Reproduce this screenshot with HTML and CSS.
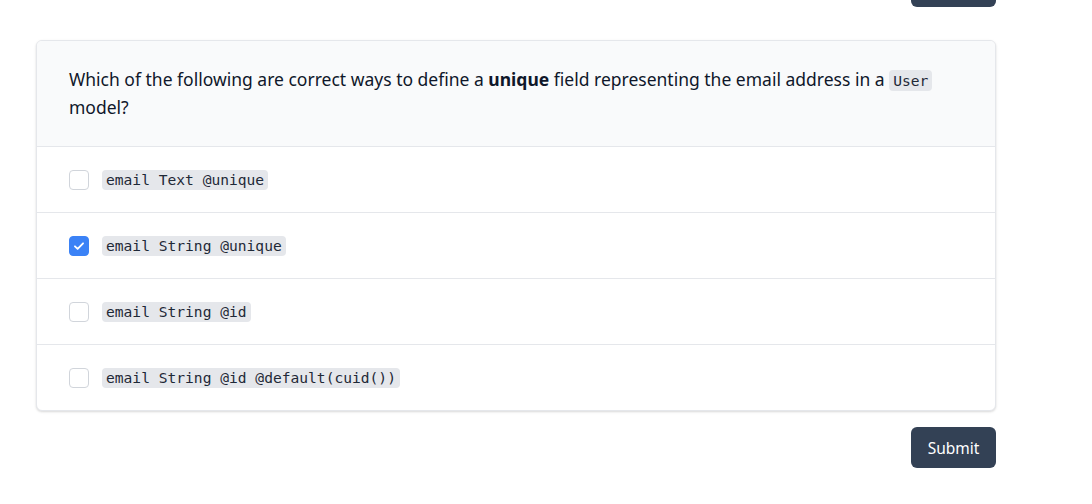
FILE: index.html
```html
<!DOCTYPE html>
<html>
<head>
<meta charset="utf-8">
<link rel="stylesheet" href="styles.css">
</head>
<body>
<div class="page">
  <div class="actions top"><button class="btn">Submit</button></div>
  <div class="card">
    <div class="question">Which of the following are correct ways to define a <strong>unique</strong> field representing the email address in a <code>User</code> model?</div>
    <label class="option"><span class="box"></span><code>email Text @unique</code></label>
    <label class="option"><span class="box checked"><svg viewBox="0 0 20 20" width="20" height="20"><path d="M5.5 10.3l3 3 6-6.3" fill="none" stroke="#fff" stroke-width="2" stroke-linecap="round" stroke-linejoin="round"/></svg></span><code>email String @unique</code></label>
    <label class="option"><span class="box"></span><code>email String @id</code></label>
    <label class="option"><span class="box"></span><code>email String @id @default(cuid())</code></label>
  </div>
  <div class="actions"><button class="btn">Submit</button></div>
</div>
</body>
</html>
```
FILE: styles.css
```css
html, body { margin: 0; padding: 0; background: #fff; }
body { font-family: "Noto Sans", "Open Sans", sans-serif; color: #111827; }
.page { width: 960px; margin-left: 36px; }
.actions { display: flex; justify-content: flex-end; }
.actions.top { margin-top: -34px; margin-bottom: 33px; }
.actions:not(.top) { margin-top: 16px; }
.btn {
  background: #334155; color: #fff; border: 0; border-radius: 6px;
  font-family: "Noto Sans", sans-serif; font-size: 15.5px; line-height: 24px;
  height: 41px; width: 85px; padding: 0; cursor: pointer;
}
.card {
  border: 1px solid #e5e7eb; border-radius: 6px; background: #fff;
  box-shadow: 0 1px 3px rgba(0,0,0,0.10), 0 1px 2px rgba(0,0,0,0.06);
  overflow: hidden;
}
.question {
  background: #f9fafb; padding: 24px 32px 25px; font-size: 17.5px; line-height: 28px;
  border-bottom: 1px solid #e5e7eb; color: #0f172a;
}
.question strong { font-weight: 700; }
code {
  font-family: "DejaVu Sans Mono", "Liberation Mono", monospace;
  font-size: 14.6px; background: #e5e7eb; border-radius: 4px; padding: 1px 4px;
  color: #1f2937;
}
.question code { font-size: 14.6px; padding: 2px 4px; line-height: 1; }
.option {
  display: flex; align-items: center; gap: 13px; padding: 20px 32px; height: 25px;
  border-bottom: 1px solid #e5e7eb;
}
.option:last-child { border-bottom: 0; }
.box {
  width: 18px; height: 18px; border: 1px solid #d1d5db; border-radius: 4px;
  background: #fff; display: flex; align-items: center; justify-content: center; flex: none;
}
.box.checked { background: #3b82f6; border-color: #3b82f6; }
.option code { line-height: 18px; }
```
